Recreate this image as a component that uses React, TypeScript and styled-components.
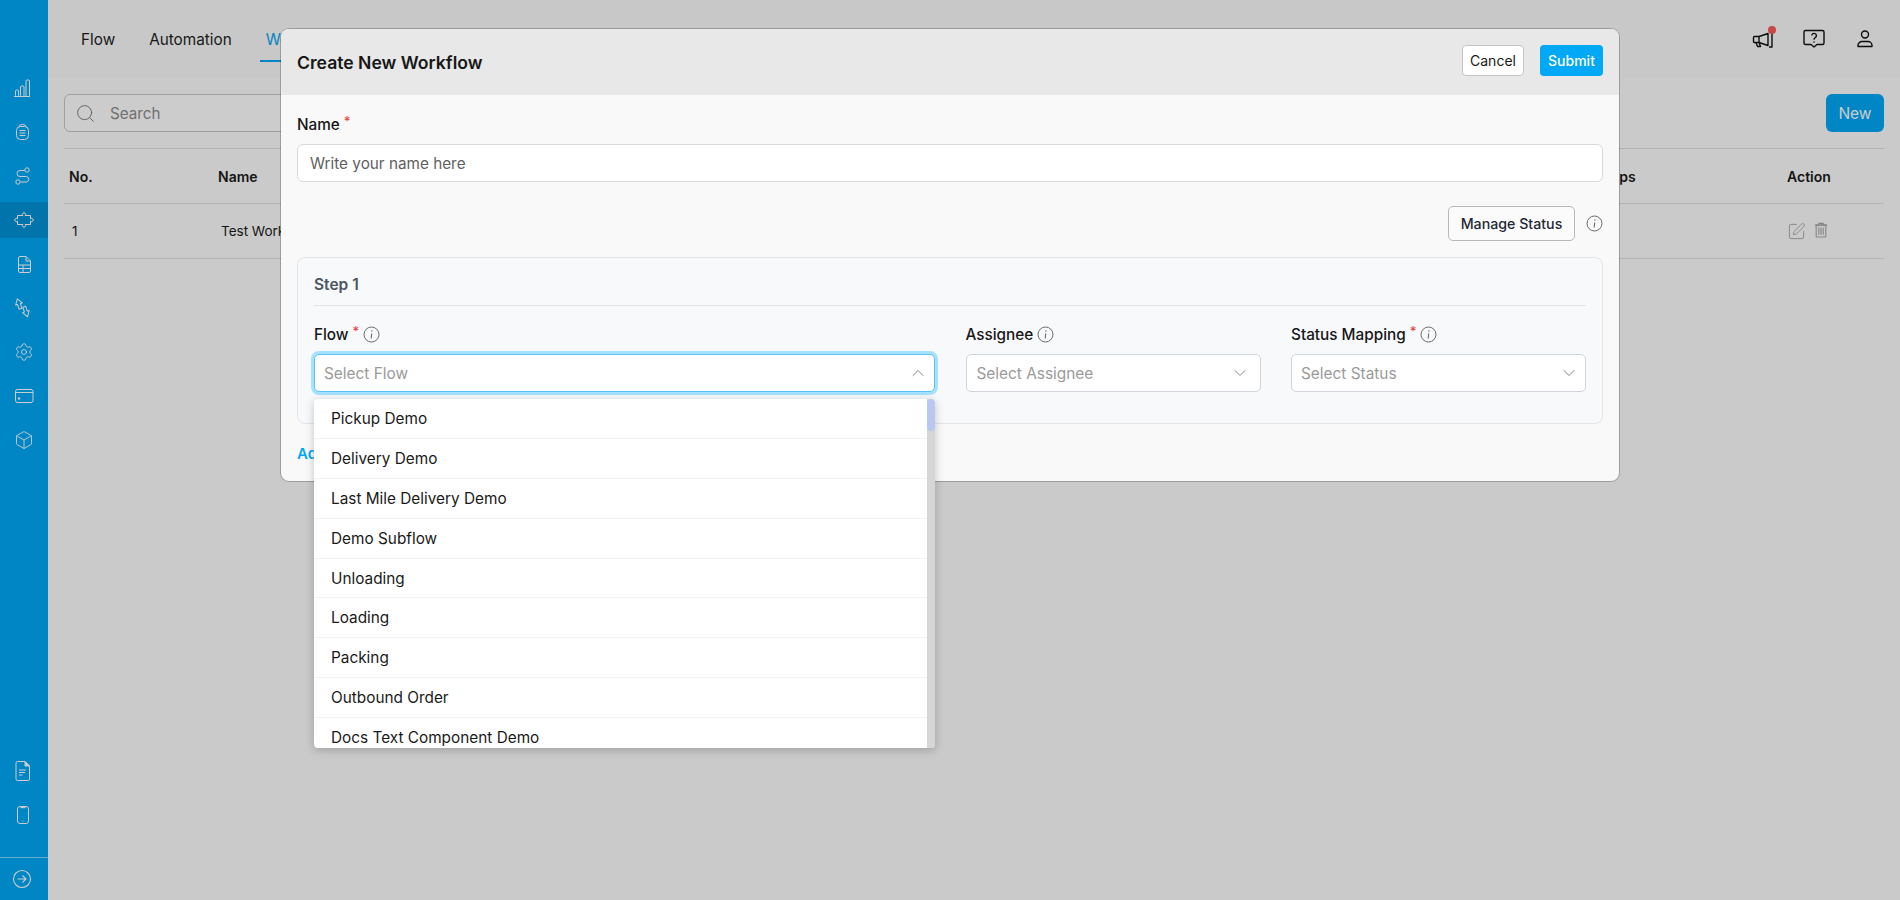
import React from 'react';
import styled, { createGlobalStyle } from 'styled-components';
import { Box, ChevronDown, ChevronUp, Search, Settings, SquarePen } from 'lucide-react';

const GlobalStyle = createGlobalStyle`
  html, body {
    margin: 0;
    padding: 0;
    background: #fdfdfd;
    font-family: Inter, "Liberation Sans", sans-serif;
    color: #1a1a1a;
  }
  * {
    box-sizing: border-box;
  }
`;

const flowOptions = [
  'Pickup Demo',
  'Delivery Demo',
  'Last Mile Delivery Demo',
  'Demo Subflow',
  'Unloading',
  'Loading',
  'Packing',
  'Outbound Order',
  'Docs Text Component Demo',
];

const ChartIcon = () => (
  <svg width="24" height="24" viewBox="0 0 24 24" fill="none" stroke="currentColor" strokeWidth="1">
    <path d="M2 20.5h16" />
    <rect x="3.5" y="14" width="3" height="6.5" rx="1" />
    <rect x="8.5" y="10" width="3.5" height="10.5" rx="1" />
    <rect x="14" y="4" width="3.5" height="16.5" rx="1" />
  </svg>
);

const DatabaseIcon = () => (
  <svg width="24" height="24" viewBox="0 0 24 24" fill="none" stroke="currentColor" strokeWidth="1">
    <rect x="4.5" y="6.5" width="12" height="13" rx="4" />
    <path d="M7 6.5a3.5 2 0 0 1 7 0" />
    <path d="M7.5 10.5h6M7.5 13h6M7.5 15.5h6" />
  </svg>
);

const RouteIcon = () => (
  <svg width="24" height="24" viewBox="0 0 24 24" fill="none" stroke="currentColor" strokeWidth="1">
    <circle cx="15" cy="6" r="2.2" />
    <circle cx="6" cy="18" r="2.2" />
    <path d="M12.8 6.5H8a3 3 0 0 0 0 6h6.5a2.8 2.8 0 0 1 0 5.500H8.500" />
  </svg>
);

const PuzzleIcon = () => (
  <svg width="24" height="24" viewBox="0 0 24 24" fill="none" stroke="currentColor" strokeWidth="1">
    <path d="M5.500 7.500H10.900a1.600 1.600 0 1 1 2.200 0H18.500V10.900a1.600 1.600 0 1 1 0 2.200V16.500H13.100a1.600 1.600 0 1 1-2.200 0H5.500V13.100a1.600 1.600 0 1 1 0-2.200z" />
  </svg>
);

const TableDocIcon = () => (
  <svg width="24" height="24" viewBox="0 0 24 24" fill="none" stroke="currentColor" strokeWidth="1">
    <path d="M6.500 6A1.500 1.500 0 0 1 8 4.500h6L18.500 9v10a1.500 1.500 0 0 1-1.500 1.500H8A1.500 1.500 0 0 1 6.500 19z" />
    <path d="M14 4.500V9h4.500M6.500 13h12M6.500 16.500h12M11 13v7.500" />
  </svg>
);

const ArrowsIcon = () => (
  <svg width="24" height="24" viewBox="0 0 24 24" fill="none" stroke="currentColor" strokeWidth="1" strokeLinejoin="round">
    <path transform="rotate(-18 7 8)" d="M7 2.500 10.500 8H8.500v5h-3V8H3.500z" />
    <path transform="rotate(-18 14 16)" d="M12.500 10.500h3v5h2L14 21l-3.500-5.500h2z" />
  </svg>
);

const CardIcon = () => (
  <svg width="24" height="24" viewBox="0 0 24 24" fill="none" stroke="currentColor" strokeWidth="1">
    <rect x="3.500" y="5.500" width="17.500" height="13" rx="2" />
    <path d="M3.500 8.500h17.500" />
    <circle cx="7" cy="14.500" r="1.200" fill="currentColor" stroke="none" />
  </svg>
);

const FileIcon = () => (
  <svg width="24" height="24" viewBox="0 0 24 24" fill="none" stroke="currentColor" strokeWidth="1">
    <path d="M4 4a1.500 1.500 0 0 1 1.500-1.500H13L17.500 7v13a1.500 1.500 0 0 1-1.500 1.500H5.500A1.500 1.500 0 0 1 4 20z" />
    <path d="M13 2.500 17.500 7H13z" fill="currentColor" />
    <path d="M7 11h7M7 13.500h6M7 16h3.500" strokeWidth="1.200" />
  </svg>
);

const PhoneIcon = () => (
  <svg width="24" height="24" viewBox="0 0 24 24" fill="none" stroke="currentColor" strokeWidth="1">
    <rect x="5.500" y="3.500" width="11" height="17" rx="2.500" />
    <path d="M8.500 4.500h5" strokeWidth="1.400" />
    <circle cx="11" cy="18" r="0.600" fill="currentColor" stroke="none" />
  </svg>
);

const ExpandIcon = () => (
  <svg width="24" height="24" viewBox="0 0 24 24" fill="none" stroke="currentColor" strokeWidth="1.100">
    <circle cx="10" cy="12" r="8.500" />
    <path d="M5.500 12h8.500M10.500 8.500 14 12l-3.500 3.500" />
  </svg>
);

const MegaphoneIcon = () => (
  <svg width="24" height="24" viewBox="0 0 24 24" fill="none" stroke="currentColor" strokeWidth="1.400" strokeLinejoin="round">
    <path d="M3.500 9.500H8l9-3v12l-9-3H3.500a1 1 0 0 1-1-1v-4a1 1 0 0 1 1-1z" />
    <path d="M8 9.500v6M21 6v14h-3M5 15.500l1.500 4h3L8 15.500" />
  </svg>
);

const HelpIcon = () => (
  <svg width="24" height="24" viewBox="0 0 24 24" fill="none" stroke="currentColor" strokeWidth="1.400" strokeLinejoin="round">
    <path d="M3.500 3.500h17A1.500 1.500 0 0 1 22 5v11a1.500 1.500 0 0 1-1.500 1.500H15l-3 2.500-3-2.500H3.500A1.500 1.500 0 0 1 2 16V5a1.500 1.500 0 0 1 1.500-1.500z" />
    <path d="M9.800 8.500a2.300 2.300 0 1 1 3.400 2.200c-.8.500-1.200 1-1.200 2" />
    <circle cx="12" cy="15" r="0.800" fill="currentColor" stroke="none" />
  </svg>
);

const UserIcon = () => (
  <svg width="24" height="24" viewBox="0 0 24 24" fill="none" stroke="currentColor" strokeWidth="1.400" strokeLinejoin="round">
    <circle cx="12" cy="7.500" r="3.500" />
    <path d="M5 19.500v-1a4 4 0 0 1 4-4h6a4 4 0 0 1 4 4v1z" />
  </svg>
);

const TrashIcon = () => (
  <svg width="14" height="16" viewBox="0 0 16 18" fill="none" stroke="#a8a8a8" strokeWidth="1.300">
    <path d="M1 3.500h14M5.500 3V1.500h5V3" />
    <path d="M2.500 3.500h11V16a1 1 0 0 1-1 1h-9a1 1 0 0 1-1-1z" />
    <path d="M5.500 6v8.500M8 6v8.500M10.500 6v8.500" />
  </svg>
);

const InfoIcon = () => (
  <svg width="17" height="17" viewBox="0 0 17 17" fill="none" stroke="#6b6b6b" strokeWidth="1">
    <circle cx="8.500" cy="8.500" r="7.500" />
    <path d="M8.700 7.500 8.200 12.500" strokeWidth="1.100" />
    <circle cx="8.900" cy="5" r="0.700" fill="#6b6b6b" stroke="none" />
  </svg>
);

const App = () => {
  return (
    <Page>
      <GlobalStyle />
      <Sidebar>
        <NavIcons>
          <NavIcon><ChartIcon /></NavIcon>
          <NavIcon><DatabaseIcon /></NavIcon>
          <NavIcon><RouteIcon /></NavIcon>
          <NavIcon $active><PuzzleIcon /></NavIcon>
          <NavIcon><TableDocIcon /></NavIcon>
          <NavIcon><ArrowsIcon /></NavIcon>
          <NavIcon><Settings size={20} strokeWidth={1.100} /></NavIcon>
          <NavIcon><CardIcon /></NavIcon>
          <NavIcon><Box size={20} strokeWidth={1.100} /></NavIcon>
        </NavIcons>
        <NavIcons>
          <NavIcon><FileIcon /></NavIcon>
          <NavIcon><PhoneIcon /></NavIcon>
        </NavIcons>
        <SidebarFooter><ExpandIcon /></SidebarFooter>
      </Sidebar>

      <Main>
        <TopNav>
          <Tabs>
            <Tab>Flow</Tab>
            <Tab>Automation</Tab>
            <Tab $active>Workflow</Tab>
          </Tabs>
          <TopActions>
            <TopIcon>
              <MegaphoneIcon />
              <NoticeDot />
            </TopIcon>
            <TopIcon><HelpIcon /></TopIcon>
            <TopIcon><UserIcon /></TopIcon>
          </TopActions>
        </TopNav>

        <Content>
          <Toolbar>
            <SearchBox>
              <Search size={21} strokeWidth={1.100} color="#7a7a7a" />
              <SearchInput placeholder="Search" readOnly />
            </SearchBox>
            <NewButton>New</NewButton>
          </Toolbar>

          <TableRow $head>
            <Cell>No.</Cell>
            <Cell>Name</Cell>
            <Cell>Steps</Cell>
            <Cell>Action</Cell>
          </TableRow>
          <TableRow>
            <Cell $indent>1</Cell>
            <Cell $indent>Test Workflow</Cell>
            <Cell />
            <RowActions>
              <SquarePen size={19} strokeWidth={1.100} color="#a0a0a0" />
              <TrashIcon />
            </RowActions>
          </TableRow>
        </Content>
      </Main>

      <Overlay>
        <Modal>
          <ModalHeader>
            <ModalTitle>Create New Workflow</ModalTitle>
            <HeaderButtons>
              <CancelButton>Cancel</CancelButton>
              <SubmitButton>Submit</SubmitButton>
            </HeaderButtons>
          </ModalHeader>

          <ModalBody>
            <FieldLabel>
              Name<Required>*</Required>
            </FieldLabel>
            <NameInput placeholder="Write your name here" readOnly />

            <StatusRow>
              <ManageButton>Manage Status</ManageButton>
              <InfoIcon />
            </StatusRow>

            <StepCard>
              <StepTitle>Step 1</StepTitle>
              <StepFields>
                <Field>
                  <FieldLabel>
                    Flow<Required>*</Required>
                    <InfoIcon />
                  </FieldLabel>
                  <SelectBox $focused>
                    <Placeholder>Select Flow</Placeholder>
                    <ChevronUp size={20} strokeWidth={1.100} color="#777" />
                    <Dropdown>
                      <OptionList>
                        {flowOptions.map((option) => (
                          <OptionRow key={option}>{option}</OptionRow>
                        ))}
                      </OptionList>
                      <ScrollTrack>
                        <ScrollThumb />
                      </ScrollTrack>
                    </Dropdown>
                  </SelectBox>
                </Field>
                <Field>
                  <FieldLabel>
                    Assignee
                    <InfoIcon />
                  </FieldLabel>
                  <SelectBox $inset>
                    <Placeholder>Select Assignee</Placeholder>
                    <ChevronDown size={20} strokeWidth={1.100} color="#777" />
                  </SelectBox>
                </Field>
                <Field>
                  <FieldLabel>
                    Status Mapping<Required>*</Required>
                    <InfoIcon />
                  </FieldLabel>
                  <SelectBox>
                    <Placeholder>Select Status</Placeholder>
                    <ChevronDown size={20} strokeWidth={1.100} color="#777" />
                  </SelectBox>
                </Field>
              </StepFields>
            </StepCard>

            <AddStep>Add Step</AddStep>
          </ModalBody>
        </Modal>
      </Overlay>
    </Page>
  );
};

export default App;

const Page = styled.div`
  position: relative;
  display: flex;
  width: 1900px;
  height: 900px;
  overflow: hidden;
`;

const Sidebar = styled.aside`
  width: 48px;
  height: 100%;
  flex-shrink: 0;
  display: flex;
  flex-direction: column;
  padding-top: 70px;
  background-color: #00a8f5;
  color: #fff;
`;

const NavIcons = styled.div`
  display: flex;
  flex-direction: column;
  gap: 8px;

  & + & {
    margin-top: auto;
  }
`;

const NavIcon = styled.div<{ $active?: boolean }>`
  height: 36px;
  display: flex;
  justify-content: center;
  align-items: center;
  background-color: ${(p) => (p.$active ? '#0092d6' : 'transparent')};
`;

const SidebarFooter = styled.div`
  height: 43px;
  margin-top: 24px;
  display: flex;
  justify-content: center;
  align-items: center;
  border-top: 1px solid rgba(255, 255, 255, 0.5);
`;

const Main = styled.main`
  flex: 1;
  display: flex;
  flex-direction: column;
`;

const TopNav = styled.header`
  height: 78px;
  display: flex;
  justify-content: space-between;
  align-items: center;
  padding: 0 23px 0 27px;
  background-color: #fafafa;
`;

const Tabs = styled.nav`
  display: flex;
  gap: 22px;
  height: 100%;
  padding-top: 20px;
`;

const Tab = styled.div<{ $active?: boolean }>`
  height: 42px;
  padding: 0 6px 1px;
  display: flex;
  align-items: center;
  font-size: 15.300px;
  color: ${(p) => (p.$active ? '#00a8f5' : '#1f1f1f')};
  border-bottom: 2px solid ${(p) => (p.$active ? '#00a8f5' : 'transparent')};
`;

const TopActions = styled.div`
  display: flex;
  gap: 27px;
`;

const TopIcon = styled.div`
  position: relative;
  width: 24px;
  height: 24px;
  color: #111;
`;

const NoticeDot = styled.span`
  position: absolute;
  top: -1px;
  right: -1px;
  width: 8px;
  height: 8px;
  border-radius: 50%;
  background-color: #f95a58;
`;

const Content = styled.section`
  flex: 1;
  padding: 16px 16px 0;
`;

const Toolbar = styled.div`
  display: flex;
  justify-content: space-between;
  padding-bottom: 16px;
  border-bottom: 1px solid #dfdfdf;
`;

const SearchBox = styled.div`
  width: 400px;
  height: 38px;
  display: flex;
  align-items: center;
  gap: 14px;
  padding: 0 10px;
  background-color: #fff;
  border: 1px solid #c9c9c9;
  border-radius: 6px;
`;

const SearchInput = styled.input`
  flex: 1;
  border: none;
  outline: none;
  padding: 0;
  background: transparent;
  font-family: inherit;
  font-size: 15.200px;
  &::placeholder {
    color: #8c8c8c;
  }
`;

const NewButton = styled.button`
  width: 58px;
  height: 38px;
  border: none;
  border-radius: 6px;
  background-color: #00a8f5;
  color: #fff;
  font-family: inherit;
  font-size: 15.500px;
`;

const TableRow = styled.div<{ $head?: boolean }>`
  height: 55px;
  display: grid;
  grid-template-columns: 149px 1fr 190px 97px;
  align-items: center;
  padding-left: 5px;
  font-size: ${(p) => (p.$head ? '14px' : '13.500px')};
  font-weight: ${(p) => (p.$head ? 600 : 400)};
  border-bottom: 1px solid ${(p) => (p.$head ? '#e2e2e2' : '#dfdfe6')};
`;

const Cell = styled.div<{ $indent?: boolean }>`
  padding-left: ${(p) => (p.$indent ? '3px' : '0')};
`;

const RowActions = styled.div`
  display: flex;
  align-items: center;
  gap: 8px;

  svg:last-child {
    margin-bottom: 2px;
  }
`;

const Overlay = styled.div`
  position: absolute;
  inset: 0;
  display: flex;
  justify-content: center;
  align-items: flex-start;
  padding-top: 29px;
  background-color: rgba(0, 0, 0, 0.2);
`;

const Modal = styled.div`
  width: 1338px;
  height: 452px;
  background-color: #f9f9f9;
  border-radius: 8px;
  box-shadow: 0 0 0 1px rgba(0, 0, 0, 0.22);
`;

const ModalHeader = styled.div`
  height: 66px;
  display: flex;
  justify-content: space-between;
  align-items: center;
  padding: 0 16px;
  background-color: #e8e8e8;
  border-radius: 8px 8px 0 0;
`;

const ModalTitle = styled.h2`
  margin: 0;
  font-size: 17.600px;
  font-weight: 600;
  color: #171717;
`;

const HeaderButtons = styled.div`
  display: flex;
  gap: 16px;
  margin-bottom: 3px;
`;

const CancelButton = styled.button`
  width: 62px;
  height: 31px;
  background-color: #fff;
  border: 1px solid #c4c4c4;
  border-radius: 4px;
  font-family: inherit;
  font-size: 14px;
  color: #1a1a1a;
`;

const SubmitButton = styled.button`
  width: 63px;
  height: 31px;
  background-color: #00a8f5;
  border: none;
  border-radius: 4px;
  font-family: inherit;
  font-size: 14px;
  font-weight: 500;
  color: #fff;
`;

const ModalBody = styled.div`
  padding: 19px 16px 0;
`;

const FieldLabel = styled.div`
  height: 20px;
  display: flex;
  align-items: center;
  margin-bottom: 10px;
  font-size: 15.300px;
  font-weight: 500;
  color: #171717;

  svg {
    margin-left: 4px;
  }
`;

const Required = styled.span`
  align-self: flex-start;
  margin-left: 4px;
  font-size: 13px;
  line-height: 14px;
  color: #ef4444;
`;

const NameInput = styled.input`
  display: block;
  width: 100%;
  height: 38px;
  padding: 0 12px;
  background-color: #fff;
  border: 1px solid #d9d9d9;
  border-radius: 6px;
  outline: none;
  font-family: inherit;
  font-size: 15.300px;
  &::placeholder {
    color: #5f5f5f;
  }
`;

const StatusRow = styled.div`
  display: flex;
  justify-content: flex-end;
  align-items: center;
  gap: 11px;
  margin-top: 24px;
`;

const ManageButton = styled.button`
  width: 127px;
  height: 35px;
  background-color: #fbfbfb;
  border: 1px solid #b8b8b8;
  border-radius: 5px;
  font-family: inherit;
  font-size: 14.200px;
  font-weight: 500;
  color: #1f2937;
`;

const StepCard = styled.div`
  height: 167px;
  margin-top: 16px;
  padding: 16px;
  background-color: #f8f9fb;
  border: 1px solid #e3e5ea;
  border-radius: 8px;
`;

const StepTitle = styled.div`
  height: 32px;
  line-height: 22px;
  font-size: 15.500px;
  font-weight: 600;
  color: #4b5563;
  border-bottom: 1px solid #e2e4e9;
`;

const StepFields = styled.div`
  display: grid;
  grid-template-columns: 1fr 295px 295px;
  column-gap: 30.500px;
  margin-top: 18px;
`;

const Field = styled.div`
  display: flex;
  flex-direction: column;
`;

const SelectBox = styled.div<{ $focused?: boolean; $inset?: boolean }>`
  position: relative;
  height: 38px;
  display: flex;
  justify-content: space-between;
  align-items: center;
  padding: ${(p) => (p.$inset ? '0 10px 0 10px' : '0 6px 0 9px')};
  background-color: #fff;
  border: 1px solid ${(p) => (p.$focused ? '#58c3f8' : '#d1d5db')};
  border-radius: 5px;
  box-shadow: ${(p) => (p.$focused ? '0 0 0 3px #a6e2ff' : 'none')};
`;

const Placeholder = styled.span`
  font-size: 15.400px;
  color: #9a9a9a;
`;

const Dropdown = styled.div`
  position: absolute;
  top: 44px;
  left: -1px;
  right: -1px;
  height: 349px;
  display: flex;
  background-color: #fff;
  border-radius: 4px;
  box-shadow: 0 2px 10px rgba(0, 0, 0, 0.22);
  overflow: hidden;
`;

const OptionList = styled.div`
  flex: 1;
  overflow: hidden;
`;

const OptionRow = styled.div`
  height: 39.900px;
  display: flex;
  align-items: center;
  padding-left: 17px;
  font-size: 15.350px;
  color: #1a1a1a;
  border-bottom: 1px solid #f2f2f2;
`;

const ScrollTrack = styled.div`
  width: 8px;
  background-color: #d6d6d6;
`;

const ScrollThumb = styled.div`
  height: 32px;
  border-radius: 4px;
  background-color: #b9c7f2;
`;

const AddStep = styled.div`
  margin-top: 20px;
  font-size: 15px;
  font-weight: 600;
  color: #00a8f5;
`;
